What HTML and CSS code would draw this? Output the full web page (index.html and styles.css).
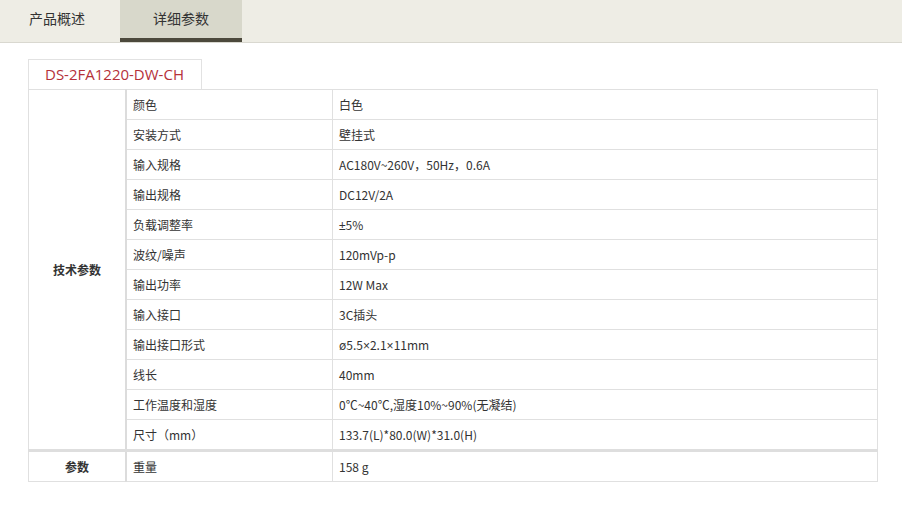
FILE: index.html
```html
<!DOCTYPE html>
<html lang="zh-CN">
<head>
<meta charset="utf-8">
<title>详细参数</title>
<link rel="stylesheet" href="styles.css">
</head>
<body>
<div class="tabs">
  <div class="tab">产品概述</div>
  <div class="tab active">详细参数</div>
</div>
<div class="content">
  <div class="model">DS-2FA1220-DW-CH</div>
  <table class="spec">
    <tbody>
      <tr><th class="group" rowspan="12">技术参数</th><td class="name">颜色</td><td class="val">白色</td></tr>
      <tr><td class="name">安装方式</td><td class="val">壁挂式</td></tr>
      <tr><td class="name">输入规格</td><td class="val">AC180V~260V，50Hz，0.6A</td></tr>
      <tr><td class="name">输出规格</td><td class="val">DC12V/2A</td></tr>
      <tr><td class="name">负载调整率</td><td class="val"><span class="lat">±</span>5%</td></tr>
      <tr><td class="name">波纹/噪声</td><td class="val">120mVp-p</td></tr>
      <tr><td class="name">输出功率</td><td class="val">12W Max</td></tr>
      <tr><td class="name">输入接口</td><td class="val">3C插头</td></tr>
      <tr><td class="name">输出接口形式</td><td class="val">ø5.5<span class="lat">×</span>2.1<span class="lat">×</span>11mm</td></tr>
      <tr><td class="name">线长</td><td class="val">40mm</td></tr>
      <tr><td class="name">工作温度和湿度</td><td class="val">0℃~40℃,湿度10%~90%(无凝结)</td></tr>
      <tr><td class="name">尺寸（mm）</td><td class="val">133.7(L)*80.0(W)*31.0(H)</td></tr>
      <tr class="sep"><th class="group">参数</th><td class="name">重量</td><td class="val">158 g</td></tr>
    </tbody>
  </table>
</div>
</body>
</html>
```

FILE: styles.css
```css
html, body {
  margin: 0;
  padding: 0;
  background: #ffffff;
  font-family: "Noto Sans CJK SC", "Noto Sans", sans-serif;
  color: #333333;
}

.tabs {
  display: flex;
  height: 42px;
  background: #eeede5;
  border-bottom: 1px solid #d9d8d0;
}

.tab {
  width: 120px;
  height: 42px;
  box-sizing: border-box;
  padding-left: 29px;
  line-height: 36px;
  font-size: 14px;
  color: #333333;
}

.tab.active {
  width: 122px;
  padding-left: 0;
  text-align: center;
  background: #d8d8cb;
  border-bottom: 4px solid #4c493c;
}

.content {
  padding: 16px 24px 0 28px;
}

.model {
  display: inline-block;
  height: 30px;
  box-sizing: border-box;
  padding: 0 17px 0 16px;
  border: 1px solid #e2e2e2;
  border-bottom: none;
  line-height: 29px;
  font-size: 15px;
  color: #b5303a;
  font-family: "Open Sans", "Noto Sans CJK SC", sans-serif;
}

.spec {
  width: 850px;
  border-collapse: collapse;
  border: 1px solid #dcdcdc;
  font-size: 12px;
}

.spec td, .spec th {
  height: 29px;
  padding: 0 6px;
  border: 1px solid #e0e0e0;
  text-align: left;
  font-weight: normal;
  white-space: nowrap;
}

.spec th.group {
  width: 84px;
  text-align: center;
  font-weight: bold;
  border-right: 2px solid #dcdcdc;
}

.spec td.name {
  width: 193px;
}

.lat {
  font-family: "Liberation Sans", sans-serif;
}

.spec tr.sep th, .spec tr.sep td {
  border-top: 3px solid #dedede;
}
```
